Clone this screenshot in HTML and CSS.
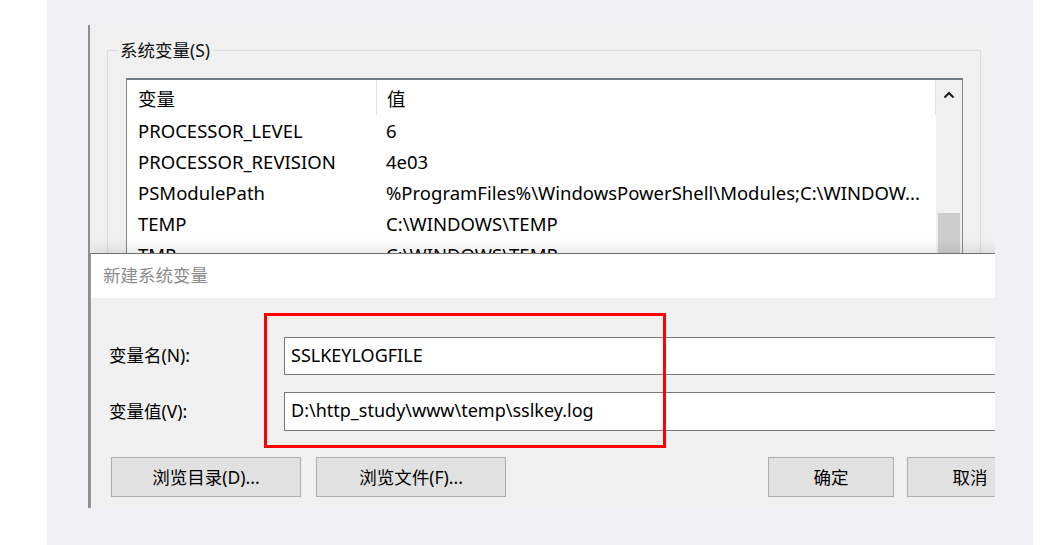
FILE: index.html
```html
<!DOCTYPE html>
<html lang="zh-CN">
<head>
<meta charset="utf-8">
<link rel="stylesheet" href="styles.css">
</head>
<body>
<div class="page">
  <div class="gutter"></div>
  <div class="panel">
    <div class="window">
      <div class="group">
        <span class="legend">系统变量(S)</span>
        <div class="listbox">
          <div class="list-main">
            <div class="row head">
              <div class="c1">变量</div>
              <div class="c2">值</div>
            </div>
            <div class="row"><div class="c1">PROCESSOR_LEVEL</div><div class="c2">6</div></div>
            <div class="row"><div class="c1">PROCESSOR_REVISION</div><div class="c2">4e03</div></div>
            <div class="row"><div class="c1">PSModulePath</div><div class="c2">%ProgramFiles%\WindowsPowerShell\Modules;C:\WINDOW...</div></div>
            <div class="row"><div class="c1">TEMP</div><div class="c2">C:\WINDOWS\TEMP</div></div>
            <div class="row"><div class="c1">TMP</div><div class="c2">C:\WINDOWS\TEMP</div></div>
          </div>
          <div class="scrollbar">
            <div class="arrow">
              <svg width="12" height="8" viewBox="0 0 12 8"><polyline points="1.5,6.5 6,2 10.5,6.5" fill="none" stroke="#202020" stroke-width="2.2"/></svg>
            </div>
            <div class="thumb"></div>
          </div>
        </div>
      </div>

      <div class="dialog">
        <div class="titlebar">新建系统变量</div>
        <div class="dbody">
          <div class="field">
            <label class="flabel">变量名(N):</label>
            <div class="input">SSLKEYLOGFILE</div>
          </div>
          <div class="field second">
            <label class="flabel">变量值(V):</label>
            <div class="input tall">D:\http_study\www\temp\sslkey.log</div>
          </div>
          <div class="buttons">
            <div class="btn wide">浏览目录(D)...</div>
            <div class="btn wide">浏览文件(F)...</div>
            <div class="btn ok">确定</div>
            <div class="btn cancel">取消</div>
          </div>
        </div>
        <div class="highlight"></div>
      </div>
    </div>
  </div>
</div>
</body>
</html>
```

FILE: styles.css
```css
html, body {
  margin: 0;
  padding: 0;
  background: #ffffff;
}

body {
  font-family: "Noto Sans", "Noto Sans CJK SC", sans-serif;
  color: #000;
}

.page {
  display: flex;
  width: 1063px;
  height: 545px;
  overflow: hidden;
}

.gutter {
  width: 47px;
  flex: none;
}

.panel {
  width: 945px;
  height: 520px;
  flex: none;
  background: #f0eff4;
  padding: 25px 0 0 41px;
}

.window {
  position: relative;
  width: 907px;
  height: 483px;
  background: #f0f0f0;
  border-left: 2px solid #8e8e8e;
  padding: 25px 0 0 17px;
  box-sizing: border-box;
  overflow: hidden;
}

.group {
  position: relative;
  width: 874px;
  height: 320px;
  border: 1px solid #dcdcdc;
  box-sizing: border-box;
  padding: 27px 0 0 18px;
}

.legend {
  position: absolute;
  top: -13px;
  left: 10px;
  padding: 0 3px 0 2px;
  background: #f0f0f0;
  font-size: 17.5px;
  line-height: 24px;
  color: #111;
}

.listbox {
  display: flex;
  width: 837px;
  height: 260px;
  border: 1px solid #7c8591;
  border-top: 2px solid #6f7a88;
  box-sizing: border-box;
  background: #fff;
}

.list-main {
  flex: 1;
}

.row {
  display: flex;
  height: 31px;
  align-items: center;
  font-size: 18.5px;
  white-space: nowrap;
}

.row.head {
  height: 35px;
  border-right: 1px solid #e3e3e3;
}

.c1 {
  width: 238px;
  padding-left: 11px;
  flex: none;
}

.c2 {
  padding-left: 10px;
}

.head .c2 {
  border-left: 1px solid #e3e3e3;
  height: 100%;
  display: flex;
  align-items: center;
}

.scrollbar {
  width: 26px;
  flex: none;
  background: #f0f0f0;
  display: flex;
  flex-direction: column;
  align-items: center;
}

.arrow {
  height: 30px;
  display: flex;
  align-items: center;
  justify-content: center;
}

.thumb {
  margin-top: 103px;
  width: 22px;
  height: 60px;
  background: #cdcdcd;
}

/* dialog over the window */
.dialog {
  position: absolute;
  left: 0;
  top: 228px;
  width: 907px;
  height: 255px;
  background: #f0f0f0;
  border-top: 1px solid #707070;
  border-left: 1px solid #9a9a9a;
  box-sizing: border-box;
  box-shadow: 0 -4px 12px rgba(0, 0, 0, 0.10);
  overflow: hidden;
}

.titlebar {
  height: 44px;
  background: #fff;
  display: flex;
  align-items: center;
  padding: 0 0 3px 12px;
  box-sizing: border-box;
  font-size: 17.5px;
  color: #8c8c8c;
}

.dbody {
  padding: 39px 0 0 18px;
}

.field {
  display: flex;
  align-items: center;
}

.field.second {
  margin-top: 17px;
}

.flabel {
  width: 175px;
  flex: none;
  font-size: 17.5px;
  padding-bottom: 3px;
}

.input {
  width: 760px;
  height: 38px;
  box-sizing: border-box;
  border: 1px solid #7a7a7a;
  background: #fff;
  padding: 0 0 3px 6px;
  display: flex;
  align-items: center;
  font-size: 18px;
}

.input.tall {
  height: 39px;
}

.buttons {
  display: flex;
  margin-top: 26px;
  padding-left: 2px;
}

.btn {
  height: 40px;
  box-sizing: border-box;
  border: 1px solid #adadad;
  background: #e1e1e1;
  display: flex;
  align-items: center;
  justify-content: center;
  padding-bottom: 2px;
  font-size: 17.5px;
  flex: none;
}

.btn.wide {
  width: 190px;
  margin-right: 15px;
}

.btn.ok {
  width: 126px;
  margin-left: 247px;
}

.btn.cancel {
  width: 126px;
  margin-left: 13px;
}

.highlight {
  position: absolute;
  left: 173px;
  top: 59px;
  width: 402px;
  height: 135px;
  box-sizing: border-box;
  border: 3px solid #ff0000;
}
```
